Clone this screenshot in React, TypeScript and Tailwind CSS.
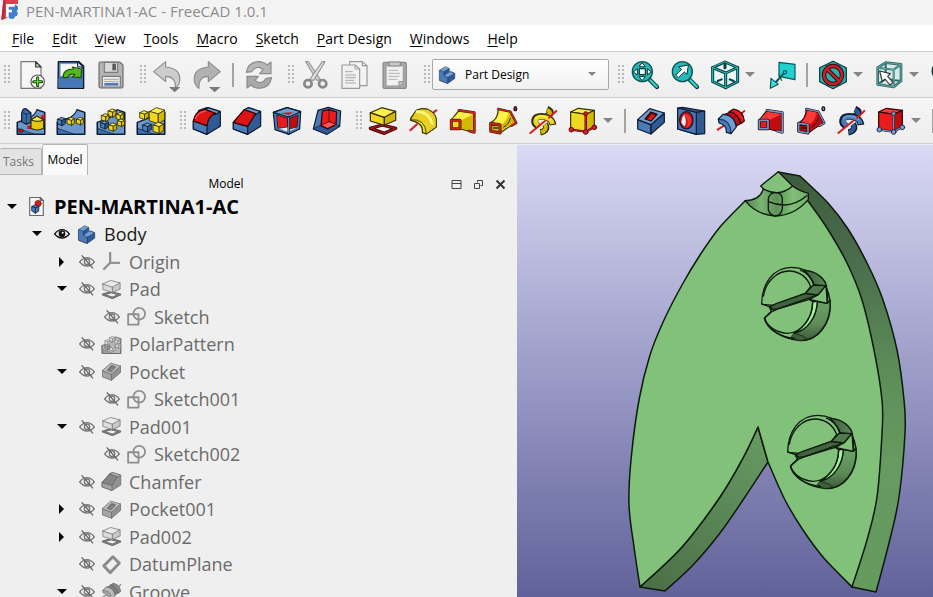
import type { ReactNode } from "react";

const INK = "#0b1a2e";
const BLUE = { top: "#6f9fd4", left: "#4a7ab8", right: "#2f5a96", line: INK };
const YELLOW = { top: "#fff04a", left: "#f0d820", right: "#d3b800", line: "#332c00" };
const RED = { top: "#ff3a3a", left: "#e81c1c", right: "#c00c0c", line: "#2a0000" };

type Tone = typeof BLUE;
type IconProps = { className?: string };

const Svg = ({ children, className = "size-7" }: { children: ReactNode; className?: string }) => (
  <svg viewBox="0 0 84 84" className={`${className} shrink-0 overflow-visible`} strokeLinejoin="round" strokeLinecap="round" strokeWidth={3.5} fill="none" aria-hidden="true">
    {children}
  </svg>
);

const Cube = ({ x, y, s, tone }: { x: number; y: number; s: number; tone: Tone }) => (
  <g transform={`translate(${x} ${y}) scale(${s / 24})`} stroke={tone.line} strokeWidth={(2.5 * 24) / s}>
    <path d="M0 6L11 0L24 4L14 10Z" fill={tone.top} />
    <path d="M0 6L14 10V26L0 21Z" fill={tone.left} />
    <path d="M14 10L24 4V19L14 26Z" fill={tone.right} />
  </g>
);

/* file and edit icons */

const NewIcon = () => (
  <Svg>
    <path d="M12 2H56L72 18V82H12Z" fill="#f6f6f6" stroke="#777" />
    <path d="M56 2V18H72Z" fill="#d0d0d0" stroke="#333" />
    <circle cx="62" cy="62" r="20" fill="#fff" stroke="#555" />
    <path d="M62 50V74M50 62H74" stroke="#123d00" strokeWidth="9" />
    <path d="M62 51V73M51 62H73" stroke="#5fdc1e" strokeWidth="4" />
  </Svg>
);

const OpenIcon = () => (
  <Svg>
    <path d="M4 2H66L80 16V82H3Z" fill="#3a6cae" stroke={INK} strokeWidth="4" />
    <path d="M10 8H62L74 20V46H10Z" fill="#f4f6f8" stroke="#8aa3c4" strokeWidth="2" />
    <path d="M62 4V18H78Z" fill="#dbe3ee" stroke={INK} strokeWidth="3" />
    <path d="M4 50H32L40 44H78V80H4Z" fill="#4778b8" />
    <path d="M18 50Q18 24 50 24L46 18L74 24L72 50L46 48L54 40Q36 36 32 50Z" fill="#55b81c" stroke="#1d4e05" />
  </Svg>
);

const SaveIcon = () => (
  <Svg>
    <path d="M10 3H68L78 12V76Q78 81 73 81H11Q6 81 6 76V8Q6 3 10 3Z" fill="#b4b4b4" stroke="#6a6a6a" />
    <path d="M22 4H62V34H22Z" fill="#d9d9d9" stroke="#7c7c7c" />
    <path d="M46 8H57V28H46Z" fill="#5c5c5c" />
    <path d="M16 46H70V78H16Z" fill="#e9e9e9" stroke="#7c7c7c" />
    <path d="M22 55H64M22 62H64" stroke="#aaa" strokeWidth="3" />
    <path d="M22 70H64" stroke="#5579b2" strokeWidth="8" strokeLinecap="butt" />
  </Svg>
);

const UndoIcon = () => (
  <Svg>
    <path d="M2 32L38 2V18Q84 22 80 60Q78 74 68 80Q68 46 38 46V62Z" fill="#cdcdcd" stroke="#8c8c8c" />
    <path d="M48 78H82L65 94Z" fill="#7b7b7b" />
  </Svg>
);

const RedoIcon = () => (
  <Svg>
    <path d="M82 32L46 2V18Q0 22 4 60Q6 74 18 82Q16 46 46 46V62Z" fill="#b2b2b2" stroke="#8c8c8c" />
    <path d="M48 78H82L65 94Z" fill="#7b7b7b" />
  </Svg>
);

const RefreshIcon = () => (
  <Svg>
    <path d="M4 34Q10 2 42 2Q56 2 66 12L78 3V38H44L54 26Q36 10 20 32Z" fill="#b6b6b6" stroke="#8c8c8c" />
    <path d="M80 50Q74 82 42 82Q28 82 18 72L6 81V46H40L30 58Q48 74 64 52Z" fill="#a9a9a9" stroke="#8c8c8c" />
  </Svg>
);

const CutIcon = () => (
  <Svg>
    <path d="M14 2L22 2L58 56L48 58Z" fill="#d6d6d6" stroke="#999" />
    <path d="M72 2L64 2L26 56L38 58Z" fill="#e2e2e2" stroke="#999" />
    <circle cx="21" cy="68" r="11" stroke="#888" strokeWidth="8" />
    <circle cx="65" cy="68" r="11" stroke="#888" strokeWidth="8" />
  </Svg>
);

const CopyIcon = () => (
  <Svg>
    <path d="M26 2H64L78 14V74H26Z" fill="#f4f4f4" stroke="#999" />
    <path d="M64 2V14H78" stroke="#999" />
    <path d="M3 12H42L56 24V82H3Z" fill="#f1f1f1" stroke="#999" />
    <path d="M42 12V24H56M14 32H34M14 42H44M14 50H44M14 58H38M14 66H44" stroke="#a6a6a6" strokeWidth="3" />
  </Svg>
);

const PasteIcon = () => (
  <Svg>
    <rect x="6" y="4" width="70" height="78" rx="4" fill="#a8a8a8" stroke="#8a8a8a" />
    <path d="M15 14H67V62L54 75H15Z" fill="#f1f1f1" stroke="#999" />
    <path d="M54 75V62H67" fill="#ccc" stroke="#999" />
    <rect x="24" y="3" width="34" height="12" fill="#c9c9c9" stroke="#888" />
    <path d="M24 28H50M24 37H56M24 46H54M24 55H48" stroke="#b3b3b3" strokeWidth="3" />
  </Svg>
);

/* view icons */

const Lens = ({ children }: { children: ReactNode }) => (
  <Svg>
    <path d="M56 56L78 78" stroke="#06383a" strokeWidth="13" />
    <path d="M58 58L77 77" stroke="#2bd3cf" strokeWidth="7" />
    <circle cx="34" cy="32" r="30" fill="#27b9b7" stroke="#0b5557" strokeWidth="4" />
    {children}
  </Svg>
);

const FitAllIcon = () => (
  <Lens>
    <path d="M34 6L43 17H25ZM34 58L43 47H25ZM8 32L19 23V41ZM60 32L49 23V41Z" fill="#fff" stroke="#06383a" strokeWidth="3" />
    <rect x="25" y="23" width="18" height="18" fill="#e4fbfa" stroke="#06383a" />
  </Lens>
);

const FitSelectionIcon = () => (
  <Lens>
    <path d="M52 13L48 40L40 33L22 50L14 42L32 25L24 18Z" fill="#fff" stroke="#06383a" strokeWidth="3" />
  </Lens>
);

const IsoIcon = () => (
  <Svg>
    <path d="M42 3L80 20V62L44 80L5 62V20Z" fill="#e9f8f7" stroke="#063f41" strokeWidth="9" />
    <path d="M5 20L44 36L80 20M44 36V80M42 4V20" stroke="#063f41" strokeWidth="9" />
    <path d="M42 3L80 20V62L44 80L5 62V20ZM5 20L44 36L80 20M44 36V80" stroke="#2cc5c1" strokeWidth="3" />
    <path d="M20 60L32 55M56 55L68 60" stroke="#063f41" strokeWidth="6" />
  </Svg>
);

const LinkIcon = () => (
  <Svg>
    <path d="M36 4L84 10V56L36 46Z" fill="#1fd2cf" stroke="#075759" />
    <circle cx="54" cy="34" r="5" stroke="#075759" />
    <path d="M50 38L24 66" stroke="#075759" strokeWidth="6" />
    <path d="M12 52L34 70L10 82Z" fill="#3fe0dc" stroke="#075759" />
    <path d="M36 42L44 58" stroke="#075759" />
  </Svg>
);

const DrawStyleIcon = () => (
  <Svg>
    <path d="M42 1L82 20V62L42 83L2 62V20Z" fill="#1fb3b1" stroke="#06383a" />
    <circle cx="42" cy="42" r="27" stroke="#3a0505" strokeWidth="13" />
    <path d="M24 24L60 60" stroke="#3a0505" strokeWidth="12" />
    <circle cx="42" cy="42" r="27" stroke="#c8202a" strokeWidth="8" />
    <path d="M24 24L60 60" stroke="#c8202a" strokeWidth="7" />
  </Svg>
);

const BoxSelectIcon = () => (
  <Svg>
    <path d="M8 20L32 5L78 10V60L56 78L8 70Z" fill="#d5e9e7" stroke="#2f6c6b" strokeWidth="8" />
    <path d="M8 20L56 26L78 10M56 26V78M32 5V54L8 70M32 54L78 60" stroke="#2f6c6b" strokeWidth="6" />
    <path d="M8 20L32 5L78 10V60L56 78L8 70ZM8 20L56 26L78 10M56 26V78" stroke="#7cc4be" strokeWidth="2" />
    <path d="M14 30L46 38L38 46L54 64L45 72L30 54L22 62Z" fill="#fff" stroke="#333" />
  </Svg>
);

const EdgeIcon = () => (
  <Svg>
    <circle cx="30" cy="30" r="26" fill="#27b9b7" stroke="#06383a" strokeWidth="5" />
  </Svg>
);

/* part design icons */

const Wedge = () => (
  <>
    <path d="M1 46L38 32Q54 24 60 8L83 16V82H1Z" fill="#6c97cc" stroke={INK} />
    <path d="M2 64L50 82H2Z" fill="#3f6fae" />
    <path d="M1 64L50 81" stroke={INK} strokeWidth="2" />
    <path d="M1 46V82H83V16" stroke={INK} strokeWidth="4" />
  </>
);

const MultiTransformIcon = () => (
  <Svg>
    <Wedge />
    <path d="M72 26L83 22V50L72 46Z" fill="#d11" />
    <ellipse cx="12" cy="71" rx="7" ry="5" fill="#c11" stroke="#500" strokeWidth="2" />
    <path d="M30 58L42 54V66H32Z" fill="#c11" />
    <path d="M14 20Q18 0 28 6L42 18V46L28 52L14 44Z" fill="#3a69a8" stroke={INK} />
    <path d="M15 16L28 22L41 18M28 22V51" stroke={INK} strokeWidth="2" />
    <path d="M42 38V64Q60 74 80 64V38Z" fill="#e2c80f" stroke="#332c00" />
    <path d="M42 38Q54 32 60 27Q70 34 80 38Q62 48 42 38Z" fill="#fff04a" stroke="#332c00" />
  </Svg>
);

const LinearPatternIcon = () => (
  <Svg>
    <Wedge />
    <Cube x={2} y={31} s={23} tone={BLUE} />
    <Cube x={31} y={31} s={22} tone={YELLOW} />
    <Cube x={59} y={31} s={21} tone={YELLOW} />
  </Svg>
);

const PolarPatternIcon = ({ className }: IconProps) => (
  <Svg className={className}>
    <Wedge />
    <Cube x={34} y={6} s={23} tone={YELLOW} />
    <Cube x={58} y={16} s={22} tone={YELLOW} />
    <Cube x={14} y={20} s={22} tone={YELLOW} />
    <Cube x={62} y={36} s={21} tone={YELLOW} />
    <Cube x={12} y={42} s={22} tone={BLUE} />
    <Cube x={36} y={48} s={23} tone={YELLOW} />
  </Svg>
);

const ScaledIcon = () => (
  <Svg>
    <Wedge />
    <Cube x={38} y={2} s={45} tone={YELLOW} />
    <Cube x={9} y={11} s={25} tone={YELLOW} />
    <Cube x={18} y={48} s={25} tone={BLUE} />
    <Cube x={49} y={46} s={31} tone={YELLOW} />
  </Svg>
);

const FilletIcon = () => (
  <Svg>
    <path d="M1 42L18 10L42 2L82 14V58L42 82L1 66Z" fill={BLUE.right} stroke={INK} />
    <path d="M36 7L46 2L82 14L68 22Z" fill={BLUE.top} stroke={INK} />
    <path d="M1 42V66L42 82V56Z" fill={BLUE.left} stroke={INK} />
    <path d="M1 42Q6 12 36 7L68 19Q46 26 42 56Z" fill="#dc1414" stroke={RED.line} />
    <path d="M8 34Q14 16 38 12" stroke="#ff4b4b" strokeWidth="4" />
  </Svg>
);

const ChamferIcon = ({ className }: IconProps) => (
  <Svg className={className}>
    <path d="M1 46L34 8L46 2L83 14V58L44 82L1 66Z" fill={BLUE.right} stroke={INK} />
    <path d="M34 8L46 2L83 14L68 22Z" fill={BLUE.top} stroke={INK} />
    <path d="M1 46V66L44 82V58Z" fill={BLUE.left} stroke={INK} />
    <path d="M1 46L34 8L68 20L44 58Z" fill="#dc1414" stroke={RED.line} />
  </Svg>
);

const DraftIcon = () => (
  <Svg>
    <path d="M1 16L42 2L83 14L80 66L48 82L6 68Z" fill={BLUE.left} stroke={INK} />
    <path d="M16 64L44 74L72 62L46 56Z" fill="#e6ecf4" />
    <path d="M12 24L44 34V60L16 64Z" fill={RED.left} stroke={RED.line} strokeWidth="2" />
    <path d="M50 34L75 24L72 60L50 66Z" fill={RED.right} stroke={RED.line} strokeWidth="2" />
    <path d="M1 16L42 2L83 14L47 30Z" fill={BLUE.top} stroke={INK} />
    <path d="M22 18L62 16L47 23Z" fill="#b01010" />
    <path d="M47 30V80" stroke={INK} strokeWidth="7" />
    <path d="M47 32V78" stroke={BLUE.top} strokeWidth="3" />
  </Svg>
);

const ThicknessIcon = () => (
  <Svg>
    <path d="M15 10L46 1L83 12L80 58L42 82L1 66Z" fill={BLUE.left} stroke={INK} />
    <path d="M1 66L42 82L80 58L70 52L44 66L22 56Z" fill={BLUE.right} stroke={INK} strokeWidth="2" />
    <path d="M28 12L48 8L71 15L69 52L44 65L24 56Z" fill={RED.left} stroke={RED.line} />
    <path d="M48 10V44L68 51M48 44L26 54" stroke={RED.line} strokeWidth="2" />
    <path d="M48 46L66 52L44 62L28 55Z" fill="#ff5252" />
  </Svg>
);

const PadIcon = ({ className }: IconProps) => (
  <Svg className={className}>
    <path d="M4 64L40 54L80 64L46 79Z" fill="#f6f0f0" stroke="#3c0505" strokeWidth="10" />
    <path d="M4 64L40 54L80 64L46 79Z" stroke="#a31018" strokeWidth="5" />
    <path d="M4 17V42L46 55V31Z" fill={YELLOW.left} stroke={YELLOW.line} />
    <path d="M46 31V55L80 40V13Z" fill={YELLOW.right} stroke={YELLOW.line} />
    <path d="M4 17L38 2L80 13L46 31Z" fill={YELLOW.top} stroke={YELLOW.line} />
  </Svg>
);

const RevolutionIcon = () => (
  <Svg>
    <path d="M4 70L24 52M66 22L82 10" stroke="#d81e1e" strokeWidth="6" />
    <path d="M5 34L22 10Q40 2 56 7Q80 18 82 38V60L52 81L40 77Q44 48 5 40Z" fill={YELLOW.left} stroke={YELLOW.line} />
    <path d="M5 38Q50 34 52 81L82 60V38Q80 18 56 7Q40 2 22 10Z" fill="#e8d022" stroke={YELLOW.line} strokeWidth="2.500" />
    <path d="M24 14Q58 14 70 50" stroke="#fff47a" strokeWidth="8" />
  </Svg>
);

const LoftShape = ({ tone, edge }: { tone: Tone; edge: string }) => (
  <Svg>
    <path d="M6 40L30 10L76 17V76L34 66Z" fill={tone.left} stroke={tone.line} />
    <path d="M8 38L32 14L74 20L34 40Z" fill={tone.top} />
    <path d="M35 42L75 21V74L35 64Z" fill={tone.right} />
    <path d="M30 10L76 17V76L60 72" stroke={tone.line} strokeWidth="8" />
    <path d="M30 10L76 17V76L60 72" stroke={edge} strokeWidth="5" />
    <rect x="7" y="40" width="26" height="25" fill={tone.left} stroke={tone.line} strokeWidth="9" />
    <rect x="7" y="40" width="26" height="25" stroke={edge} strokeWidth="5" />
  </Svg>
);

const PipeShape = ({ tone, edge }: { tone: Tone; edge: string }) => (
  <Svg>
    <path d="M4 48Q26 38 28 6L64 14L82 48Q60 58 34 78Z" fill={tone.left} stroke={tone.line} />
    <path d="M8 48Q30 36 32 10L58 16Q54 42 34 54Z" fill={tone.top} />
    <path d="M34 56Q54 46 62 18L78 46Q56 56 34 74Z" fill={tone.right} />
    <path d="M44 60Q60 52 64 34" stroke={tone.line} strokeWidth="3" />
    <path d="M28 6L64 14L82 48L68 56" stroke={tone.line} strokeWidth="7" />
    <path d="M28 6L64 14L82 48L68 56" stroke={edge} strokeWidth="4" />
    <path d="M5 49L33 53V78L5 73Z" fill={tone.right} stroke={tone.line} strokeWidth="9" />
    <path d="M5 49L33 53V78L5 73Z" stroke={edge} strokeWidth="5" />
    <path d="M14 63H26" stroke={tone.line} strokeWidth="5" />
    <ellipse cx="79" cy="5" rx="4" ry="6" fill={edge} stroke="#201020" strokeWidth="4" />
  </Svg>
);

const HelixShape = ({ tone }: { tone: Tone }) => (
  <Svg>
    <path d="M54 6C72 14 64 26 50 28M34 76C50 74 56 62 48 52" stroke={tone.line} strokeWidth="19" strokeLinecap="butt" />
    <path d="M54 8C70 16 62 25 50 28M36 76C49 72 54 62 48 52" stroke={tone.right} strokeWidth="12" strokeLinecap="butt" />
    <path d="M28 58C10 48 14 28 36 28C56 28 70 38 72 54" stroke={tone.line} strokeWidth="20" strokeLinecap="butt" />
    <path d="M28 55C14 46 18 30 36 30C56 30 68 38 71 51" stroke={tone.left} strokeWidth="13" strokeLinecap="butt" />
    <path d="M20 34C28 24 52 26 66 38" stroke={tone.top} strokeWidth="4" />
    <path d="M4 78L48 42M60 32L82 12" stroke="#d81e1e" strokeWidth="6" />
  </Svg>
);

const PrimitiveShape = ({ tone, node, nodeLine }: { tone: Tone; node: string; nodeLine: string }) => (
  <Svg>
    <path d="M5 15L28 4L76 10L52 22Z" fill={tone.top} stroke={tone.line} />
    <path d="M5 15L52 22V74L5 68Z" fill={tone.left} stroke={tone.line} />
    <path d="M52 22L76 10V58L52 74Z" fill={tone.right} stroke={tone.line} />
    <path d="M50 20V70M6 68L50 74L76 60" stroke={nodeLine} strokeWidth="7" />
    <path d="M50 20V70M6 68L50 74L76 60" stroke={node} strokeWidth="3" />
    <g fill={node} stroke={nodeLine} strokeWidth="3">
      <circle cx="50" cy="20" r="6" />
      <circle cx="7" cy="68" r="7" />
      <circle cx="50" cy="75" r="7" />
      <circle cx="76" cy="61" r="7" />
    </g>
  </Svg>
);

const PocketIcon = ({ className }: IconProps) => (
  <Svg className={className}>
    <path d="M2 38V66L42 81V53Z" fill={BLUE.left} stroke={INK} />
    <path d="M42 53V81L82 46V18Z" fill={BLUE.right} stroke={INK} />
    <path d="M2 38L38 5L82 18L42 53Z" fill={BLUE.top} stroke={INK} />
    <path d="M24 36L42 15L60 22L42 42Z" fill="#7c0a0a" stroke={RED.line} />
    <path d="M32 36L44 22L54 26L42 40Z" fill="#e81616" />
  </Svg>
);

const HoleIcon = () => (
  <Svg>
    <path d="M2 3L16 1L83 12V80L58 82L2 66Z" fill={BLUE.right} stroke={INK} />
    <path d="M2 3L58 16V82L2 66Z" fill={BLUE.left} stroke={INK} />
    <path d="M58 16L83 12" stroke={INK} />
    <ellipse cx="28" cy="40" rx="20" ry="26" fill="#c81010" stroke={INK} />
    <path d="M20 20Q44 22 43 42Q40 60 28 62Q38 40 20 20Z" fill="#f23030" />
    <path d="M13 46Q15 26 22 24Q30 42 24 58Q15 54 13 46Z" fill="#e8eef6" />
  </Svg>
);

const GrooveIcon = ({ className }: IconProps) => (
  <Svg className={className}>
    <path d="M2 68L24 54M70 22L82 12" stroke="#d81e1e" strokeWidth="6" />
    <path d="M36 14L50 6Q80 12 82 42L72 50Q68 26 36 14Z" fill={RED.left} stroke={RED.line} />
    <path d="M24 22L42 14Q66 24 70 50L56 58Q50 34 24 22Z" fill={RED.right} stroke={RED.line} />
    <path d="M4 36L18 22Q54 24 58 60L42 80L28 76Q30 54 6 48Z" fill={BLUE.left} stroke={INK} />
    <path d="M9 34L19 25Q50 28 55 60L43 74Q42 38 9 34Z" fill={BLUE.top} />
    <path d="M4 37Q42 36 42 80" stroke={INK} strokeWidth="2.500" />
  </Svg>
);

const BodyIcon = ({ className }: IconProps) => (
  <Svg className={className}>
    <path d="M8 20L34 4L52 12V30L60 26L78 34V58L44 82L8 68Z" fill={BLUE.left} stroke={INK} strokeWidth="3" />
    <path d="M8 20L34 4L52 12L28 28Z" fill={BLUE.top} />
    <path d="M28 44L52 28L78 36L46 54Z" fill={BLUE.top} />
    <path d="M28 28L52 12V30L28 46ZM46 54L78 36V58L44 82Z" fill={BLUE.right} />
    <path d="M8 20L28 28V45L46 54V80M28 28L52 12M46 54L78 35" stroke={INK} strokeWidth="2" />
  </Svg>
);

const DocumentIcon = ({ className }: IconProps) => (
  <Svg className={className}>
    <path d="M12 2H58L72 16V82H12Z" fill="#f7f7f7" stroke="#666" strokeWidth="5" />
    <path d="M58 2V16H72Z" fill="#777" stroke="#555" />
    <circle cx="49" cy="29" r="14" fill="#d32020" stroke="#8a2020" />
    <path d="M22 42L38 34L52 42V62L38 72L22 62Z" fill={BLUE.left} stroke={INK} />
    <path d="M22 42L37 48L52 42M37 48V72" stroke={INK} />
  </Svg>
);

const OriginIcon = ({ className }: IconProps) => (
  <Svg className={className}>
    <path d="M36 0V48M36 48H80M36 48L6 78" stroke="#555" strokeWidth="10" strokeLinecap="butt" />
  </Svg>
);

const SketchIcon = ({ className }: IconProps) => (
  <Svg className={className}>
    <rect x="5" y="32" width="46" height="46" stroke="#4f4f4f" strokeWidth="8" />
    <circle cx="54" cy="30" r="26" stroke="#4f4f4f" strokeWidth="8" />
  </Svg>
);

const DatumPlaneIcon = ({ className }: IconProps) => (
  <Svg className={className}>
    <path d="M48 8L76 36L36 78L8 48Z" stroke="#4a4a4a" strokeWidth="13" />
  </Svg>
);

const EyeIcon = ({ hidden }: { hidden?: boolean }) => (
  <svg viewBox="0 0 48 42" className="h-3.5 w-4" fill="none" aria-hidden="true">
    <path d="M2 21Q12 8 24 8Q36 8 46 21Q36 33 24 33Q12 33 2 21Z" stroke={hidden ? "#777" : "#111"} strokeWidth="4" />
    <circle cx="24" cy="20" r="8" fill={hidden ? "none" : "#111"} stroke={hidden ? "#777" : "#111"} strokeWidth="4" />
    {hidden ? <path d="M8 1L42 40" stroke="#666" strokeWidth="4" /> : <circle cx="26" cy="17" r="3" fill="#fff" />}
  </svg>
);

const Logo = () => (
  <svg viewBox="0 0 54 60" className="h-5 w-[18px] shrink-0" fill="none" aria-hidden="true">
    <path d="M24 14H48L54 20V28L50 34L54 40L50 48L44 50L42 56H30L24 50Z" fill="#3f7fd0" />
    <path d="M10 0H54V12H26V50L16 56L4 60Z" fill="#d8414b" />
    <path d="M10 0L4 60L12 56L16 0Z" fill="#b52a3a" />
    <path d="M22 52V16H44M22 33H36" stroke="#fff" strokeWidth="8" />
  </svg>
);

/* toolbar parts */

const Handle = () => (
  <div className="mr-px ml-[9px] flex w-[6px] shrink-0 justify-between first:ml-1">
    <div className="h-5 w-0.5 bg-[repeating-linear-gradient(#b9b9b9_0_2px,transparent_2px_4px)]" />
    <div className="h-5 w-0.5 bg-[repeating-linear-gradient(#b9b9b9_0_2px,transparent_2px_4px)]" />
  </div>
);

const Separator = () => <div className="mx-[5px] h-6 w-0.5 shrink-0 bg-[#a3a3a3]" />;

const Tool = ({ label, children }: { label: string; children: ReactNode }) => (
  <button aria-label={label} className="flex h-10 w-10 shrink-0 items-center justify-center hover:bg-[#e0e6ee]">
    {children}
  </button>
);

const More = ({ label }: { label: string }) => (
  <button aria-label={label} className="flex h-10 w-4 shrink-0 items-center">
    <svg viewBox="0 0 10 5" className="h-[5px] w-2.5" aria-hidden="true">
      <path d="M0 0H10L5 5Z" fill="#858585" />
    </svg>
  </button>
);

const menus = ["File", "Edit", "View", "Tools", "Macro", "Sketch", "Part Design", "Windows", "Help"];

const Toolbars = () => (
  <>
    <div className="flex h-[46px] shrink-0 items-center overflow-hidden border-b border-[#cfcfcf] bg-linear-to-b from-[#f5f5f5] to-[#eeeeee]">
      <Handle />
      <Tool label="New"><NewIcon /></Tool>
      <Tool label="Open"><OpenIcon /></Tool>
      <Tool label="Save"><SaveIcon /></Tool>
      <Handle />
      <Tool label="Undo"><UndoIcon /></Tool>
      <Tool label="Redo"><RedoIcon /></Tool>
      <Separator />
      <Tool label="Refresh"><RefreshIcon /></Tool>
      <Handle />
      <Tool label="Cut"><CutIcon /></Tool>
      <Tool label="Copy"><CopyIcon /></Tool>
      <Tool label="Paste"><PasteIcon /></Tool>
      <Handle />
      <div className="relative ml-px w-[177px] shrink-0">
        <select aria-label="Workbench" className="h-[31px] w-full appearance-none rounded-xs border border-[#a9a9a9] bg-linear-to-b from-white to-[#f1f1f1] pl-8 text-xs text-black">
          <option>Part Design</option>
        </select>
        <span className="pointer-events-none absolute inset-y-0 left-1.5 flex items-center"><BodyIcon className="size-[18px]" /></span>
        <span className="pointer-events-none absolute inset-y-0 right-3 flex items-center">
          <svg viewBox="0 0 10 5" className="h-[5px] w-2.5" aria-hidden="true"><path d="M1 0H9L5 4Z" fill="#858585" /></svg>
        </span>
      </div>
      <Handle />
      <Tool label="Fit all"><FitAllIcon /></Tool>
      <Tool label="Fit selection"><FitSelectionIcon /></Tool>
      <Tool label="Isometric"><IsoIcon /></Tool>
      <More label="More views" />
      <Tool label="Go to linked object"><LinkIcon /></Tool>
      <Separator />
      <Tool label="Draw style"><DrawStyleIcon /></Tool>
      <More label="More draw styles" />
      <Tool label="Box selection"><BoxSelectIcon /></Tool>
      <More label="More selection tools" />
      <Tool label="Edge view"><EdgeIcon /></Tool>
    </div>
    <div className="flex h-[46px] shrink-0 items-center overflow-hidden border-b border-[#cfcfcf] bg-linear-to-b from-[#f5f5f5] to-[#eeeeee]">
      <Handle />
      <Tool label="Multi transform"><MultiTransformIcon /></Tool>
      <Tool label="Linear pattern"><LinearPatternIcon /></Tool>
      <Tool label="Polar pattern"><PolarPatternIcon /></Tool>
      <Tool label="Scaled"><ScaledIcon /></Tool>
      <Handle />
      <Tool label="Fillet"><FilletIcon /></Tool>
      <Tool label="Chamfer"><ChamferIcon /></Tool>
      <Tool label="Draft"><DraftIcon /></Tool>
      <Tool label="Thickness"><ThicknessIcon /></Tool>
      <Handle />
      <Tool label="Pad"><PadIcon /></Tool>
      <Tool label="Revolution"><RevolutionIcon /></Tool>
      <Tool label="Additive loft"><LoftShape tone={YELLOW} edge="#d81e1e" /></Tool>
      <Tool label="Additive pipe"><PipeShape tone={YELLOW} edge="#d81e1e" /></Tool>
      <Tool label="Additive helix"><HelixShape tone={YELLOW} /></Tool>
      <Tool label="Additive box"><PrimitiveShape tone={YELLOW} node="#d02020" nodeLine="#6a0808" /></Tool>
      <More label="More additive primitives" />
      <Separator />
      <Tool label="Pocket"><PocketIcon /></Tool>
      <Tool label="Hole"><HoleIcon /></Tool>
      <Tool label="Groove"><GrooveIcon /></Tool>
      <Tool label="Subtractive loft"><LoftShape tone={RED} edge="#6f94cc" /></Tool>
      <Tool label="Subtractive pipe"><PipeShape tone={RED} edge="#6f94cc" /></Tool>
      <Tool label="Subtractive helix"><HelixShape tone={BLUE} /></Tool>
      <Tool label="Subtractive box"><PrimitiveShape tone={RED} node="#7f9fd0" nodeLine="#1c2f50" /></Tool>
      <More label="More subtractive primitives" />
      <Separator />
    </div>
  </>
);

/* model tree */

type Row = { name: string; depth: number; icon: (p: IconProps) => ReactNode; arrow?: "open" | "closed" };

const rows: Row[] = [
  { name: "PEN-MARTINA1-AC", depth: 0, icon: DocumentIcon, arrow: "open" },
  { name: "Body", depth: 1, icon: BodyIcon, arrow: "open" },
  { name: "Origin", depth: 2, icon: OriginIcon, arrow: "closed" },
  { name: "Pad", depth: 2, icon: PadIcon, arrow: "open" },
  { name: "Sketch", depth: 3, icon: SketchIcon },
  { name: "PolarPattern", depth: 2, icon: PolarPatternIcon },
  { name: "Pocket", depth: 2, icon: PocketIcon, arrow: "open" },
  { name: "Sketch001", depth: 3, icon: SketchIcon },
  { name: "Pad001", depth: 2, icon: PadIcon, arrow: "open" },
  { name: "Sketch002", depth: 3, icon: SketchIcon },
  { name: "Chamfer", depth: 2, icon: ChamferIcon },
  { name: "Pocket001", depth: 2, icon: PocketIcon, arrow: "closed" },
  { name: "Pad002", depth: 2, icon: PadIcon, arrow: "closed" },
  { name: "DatumPlane", depth: 2, icon: DatumPlaneIcon },
  { name: "Groove", depth: 2, icon: GrooveIcon, arrow: "open" },
];

const indent = ["pl-0", "pl-[25px]", "pl-[50px]", "pl-[75px]"];
const textStyle = ["text-xl font-bold text-black", "text-lg text-[#1c1c1c]", "text-lg text-[#6b6b6b]", "text-lg text-[#6b6b6b]"];

const TreeRow = ({ name, depth, icon: Icon, arrow }: Row) => (
  <li className={`flex items-center gap-0.5 odd:h-[27px] even:h-7 ${indent[depth]}`}>
    <button aria-label={`Toggle ${name}`} disabled={!arrow} className="flex w-[23px] shrink-0 justify-center">
      {arrow && (
        <svg viewBox="0 0 10 10" className="size-2.5" aria-hidden="true">
          <path d={arrow === "open" ? "M0 2H10L5 7Z" : "M2 0L7 5L2 10Z"} fill="#000" />
        </svg>
      )}
    </button>
    {depth > 0 && (
      <button aria-label={`Visibility of ${name}`} className="flex w-[23px] shrink-0 justify-center">
        <EyeIcon hidden={depth > 1} />
      </button>
    )}
    <span className="flex w-[23px] shrink-0 justify-center">
      <Icon className={depth > 1 ? "size-[19px] opacity-60 grayscale" : "size-[19px]"} />
    </span>
    <span className={`ml-1 leading-6 whitespace-nowrap ${textStyle[depth]}`}>{name}</span>
  </li>
);

const ModelPanel = () => (
  <aside className="flex w-[517px] shrink-0 flex-col overflow-hidden bg-[#efefef]">
    <div className="flex h-[31px] shrink-0 items-end text-xs">
      <button className="h-[27px] w-[42px] rounded-t-xs border border-l-0 border-[#b5b5b5] bg-[#e3e3e3] pr-1 text-[#777]">Tasks</button>
      <button className="h-[31px] w-[46px] rounded-t-xs border border-b-0 border-[#b5b5b5] bg-[#fafafa] text-black">Model</button>
    </div>
    <div className="flex h-[18px] shrink-0 items-center gap-[11px] pr-[11px] pl-3 text-xs">
      <h2 className="grow text-center text-black">Model</h2>
      <button aria-label="Minimize">
        <svg viewBox="0 0 11 11" className="size-[11px]" fill="none" stroke="#444"><path d="M1 1.500H10V9.500H1ZM1 4.500H10" /></svg>
      </button>
      <button aria-label="Float">
        <svg viewBox="0 0 11 11" className="size-[11px]" fill="none" stroke="#444"><path d="M4.500 3.500V1.500H9.500V6.500H7.500M1.500 4.500H6.500V9.500H1.500Z" /></svg>
      </button>
      <button aria-label="Close">
        <svg viewBox="0 0 11 11" className="size-[11px]" fill="none" stroke="#333" strokeWidth="2"><path d="M1.500 1.500L9.500 9.500M9.500 1.500L1.500 9.500" /></svg>
      </button>
    </div>
    <ul>
      {rows.map((row) => (
        <TreeRow key={row.name} {...row} />
      ))}
    </ul>
  </aside>
);

/* 3d view */

type Point = [number, number];

// spline through the points, without the leading move
const curve = (pts: Point[]) =>
  pts
    .slice(1)
    .map((p, i) => {
      const a = pts[Math.max(i - 1, 0)];
      const b = pts[i];
      const d = pts[Math.min(i + 2, pts.length - 1)];
      return `C${b[0] + (p[0] - a[0]) / 6} ${b[1] + (p[1] - a[1]) / 6} ${p[0] - (d[0] - b[0]) / 6} ${p[1] - (d[1] - b[1]) / 6} ${p[0]} ${p[1]}`;
    })
    .join("");

const leftSide: Point[] = [[745, 201], [720, 227], [700, 255], [682, 285], [664, 320], [650, 355], [639, 400], [631, 460], [629, 505], [634, 547], [640, 587]];
const leftLeg: Point[] = [[640, 587], [682, 547], [720, 497], [743, 458], [758, 427]];
const rightLeg: Point[] = [[768, 462], [785, 500], [803, 530], [823, 557], [852, 587]];
const rightSide: Point[] = [[852, 587], [867, 540], [877, 497], [882, 433], [882, 400], [874, 350], [862, 300], [847, 263], [827, 228], [808, 201]];
const rimSide: Point[] = [[800, 176], [828, 203], [848, 229], [868, 265], [883, 300], [897, 350], [904, 400], [905, 433], [899, 497], [889, 543], [876, 592]];
const legBack: Point[] = [[665, 591], [693, 565], [720, 533], [743, 500], [768, 462]];

const Screw = ({ x, y }: { x: number; y: number }) => (
  <g transform={`translate(${x} ${y}) scale(0.3333)`} strokeWidth="4">
    <path d="M125 432C126 370 160 322 215 322C236 322 246 326 258 331C300 338 330 385 331 436C331 490 296 542 240 542C190 536 140 510 133 474L155 453L148 440Z" fill="#82c17a" />
    <path d="M252 331C290 332 316 358 320 380L282 375C276 360 266 344 252 331Z" fill="url(#screwDark)" />
    <path d="M292 425L322 430L330 420C336 490 290 546 240 540L222 520C262 510 290 470 292 425Z" fill="url(#screwSide)" />
    <path d="M215 528L222 520L246 527L262 538L240 542L215 536Z" fill="#3f5f3c" strokeWidth="2" />
    <path d="M278 425H292C290 470 264 510 222 520C256 500 278 466 278 425Z" fill="#a0f596" />
    <path d="M130 410C136 366 170 332 210 333C244 336 262 352 272 380" />
    <path d="M240 330C260 338 276 356 283 376" />
    <path d="M272 380L256 400L162 436L125 433" />
    <path d="M150 440L166 432L256 400L290 404L268 414L176 446L158 448Z" fill="#41633f" />
    <path d="M256 400L280 375L318 377L294 405Z" fill="#4f7a4c" />
    <path d="M294 405L318 377L322 430L268 418Z" fill="#82c17a" />
    <path d="M148 440L155 455L176 446L268 418L278 425C278 480 240 520 200 520C168 518 140 498 134 474L155 455" />
    <path d="M133 474C142 508 180 532 225 535" />
    <path d="M318 377C324 394 324 412 322 430" />
  </g>
);

const Viewport = () => (
  <main className="mt-px min-w-0 grow bg-linear-to-b from-[#dadaf5] to-[#62629a]">
    <svg viewBox="517 145 416 452" preserveAspectRatio="xMidYMin slice" className="size-full" stroke="#0c1a0c" strokeWidth="1.500" strokeLinejoin="round" fill="none" role="img" aria-label="Part">
      <defs>
        <linearGradient id="rim" x1="790" y1="172" x2="890" y2="592" gradientUnits="userSpaceOnUse">
          <stop offset="0" stopColor="#3d5c3b" />
          <stop offset="0.2" stopColor="#48694a" />
          <stop offset="0.5" stopColor="#5c8d58" />
          <stop offset="0.7" stopColor="#669a60" />
          <stop offset="1" stopColor="#659a5f" />
        </linearGradient>
        <linearGradient id="leg" x1="758" y1="430" x2="655" y2="590" gradientUnits="userSpaceOnUse">
          <stop offset="0" stopColor="#679a63" />
          <stop offset="1" stopColor="#4c7048" />
        </linearGradient>
        <linearGradient id="screwDark" x1="0" x2="1" y1="0" y2="0">
          <stop offset="0" stopColor="#3e5d3c" />
          <stop offset="1" stopColor="#5d8a59" />
        </linearGradient>
        <linearGradient id="screwSide" x1="0" x2="0" y1="0" y2="1">
          <stop offset="0" stopColor="#6ba466" />
          <stop offset="0.6" stopColor="#5d8d58" />
          <stop offset="1" stopColor="#3c5a3a" />
        </linearGradient>
        <linearGradient id="bowl" x1="75" x2="265" y1="0" y2="0" gradientUnits="userSpaceOnUse">
          <stop offset="0" stopColor="#547c50" />
          <stop offset="0.25" stopColor="#79b572" />
          <stop offset="0.5" stopColor="#5f9159" />
          <stop offset="0.75" stopColor="#80bf78" />
          <stop offset="1" stopColor="#74ae6d" />
        </linearGradient>
      </defs>
      <path d={`M778 172L800 176${curve(rimSide)}L852 587L790 400Z`} fill="url(#rim)" />
      <path d={`M640 587${curve(leftLeg)}L768 462L768 462${curve([...legBack].reverse())}Z`} fill="url(#leg)" />
      <path d={`M745 201${curve(leftSide)}${curve(leftLeg)}L768 462${curve(rightLeg)}${curve(rightSide)}Z`} fill="#82c17a" />
      <g transform="translate(720 160) scale(0.3333)" strokeWidth="4">
        <path d="M75 122Q118 120 128 92L130 84L218 78Q236 92 265 100V118Q225 166 165 168Q110 165 75 122Z" fill="url(#bowl)" />
        <path d="M175 35L122 78L132 88Q180 112 218 78L200 60Z" fill="#82c17a" />
        <path d="M145 125Q210 152 262 106" />
        <path d="M145 150V115Q150 98 167 98Q184 98 187 115V145Q184 166 167 168Q150 166 145 150Z" />
      </g>
      <Screw x={720} y={160} />
      <Screw x={746} y={308} />
    </svg>
  </main>
);

export default function App() {
  return (
    <div className="flex h-screen flex-col overflow-hidden bg-[#efefef] font-['Open_Sans','Noto_Sans',sans-serif]">
      <header className="flex h-[25px] shrink-0 items-start gap-2 bg-[#f3f3f3]">
        <Logo />
        <h1 className="text-[15px] leading-[22px] text-[#8c8c8c]">PEN-MARTINA1-AC - FreeCAD 1.0.1</h1>
      </header>
      <nav className="flex h-[27px] shrink-0 items-center gap-[18px] border-b border-[#cfcfcf] bg-white pt-px pl-3 text-sm text-black">
        {menus.map((menu) => (
          <button key={menu} className="whitespace-nowrap">
            <u className="underline-offset-2">{menu[0]}</u>
            {menu.slice(1)}
          </button>
        ))}
      </nav>
      <Toolbars />
      <div className="flex min-h-0 grow">
        <ModelPanel />
        <Viewport />
      </div>
    </div>
  );
}
